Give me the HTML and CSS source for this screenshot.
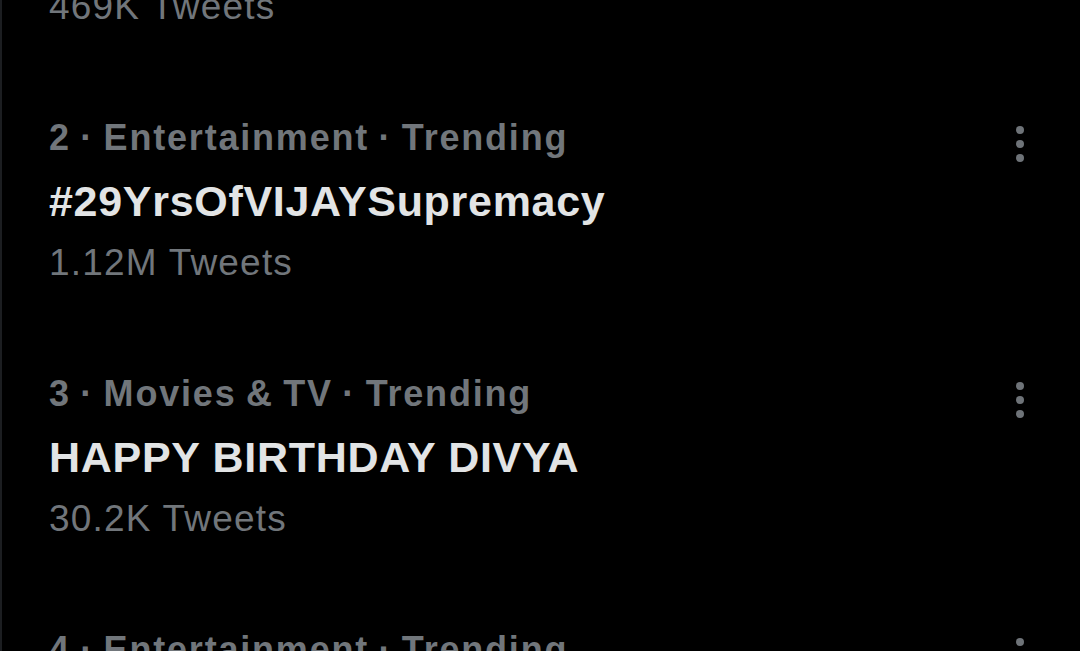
FILE: index.html
```html
<!DOCTYPE html>
<html lang="en">
<head>
    <meta charset="UTF-8">
    <meta name="viewport" content="width=device-width, initial-scale=1.0">
    <title>Trends for you</title>
    <link rel="stylesheet" href="styles.css">
</head>
<body>
    <div class="timeline">
        <div class="trend-list">
            <div class="trend">
                <div class="trend-head">
                    <div class="trend-meta">1 · Trending in India</div>
                    <svg class="more" width="8" height="36" viewBox="0 0 8 36"><circle cx="4" cy="4" r="4"/><circle cx="4" cy="18" r="4"/><circle cx="4" cy="32" r="4"/></svg>
                </div>
                <div class="trend-title">#ThalapathyVijay</div>
                <div class="trend-count">469K Tweets</div>
            </div>

            <div class="trend">
                <div class="trend-head">
                    <div class="trend-meta">2 · Entertainment · Trending</div>
                    <svg class="more" width="8" height="36" viewBox="0 0 8 36"><circle cx="4" cy="4" r="4"/><circle cx="4" cy="18" r="4"/><circle cx="4" cy="32" r="4"/></svg>
                </div>
                <div class="trend-title">#29YrsOfVIJAYSupremacy</div>
                <div class="trend-count">1.12M Tweets</div>
            </div>

            <div class="trend">
                <div class="trend-head">
                    <div class="trend-meta">3 · Movies &amp; TV · Trending</div>
                    <svg class="more" width="8" height="36" viewBox="0 0 8 36"><circle cx="4" cy="4" r="4"/><circle cx="4" cy="18" r="4"/><circle cx="4" cy="32" r="4"/></svg>
                </div>
                <div class="trend-title">HAPPY BIRTHDAY DIVYA</div>
                <div class="trend-count">30.2K Tweets</div>
            </div>

            <div class="trend">
                <div class="trend-head">
                    <div class="trend-meta">4 · Entertainment · Trending</div>
                    <svg class="more" width="8" height="36" viewBox="0 0 8 36"><circle cx="4" cy="4" r="4"/><circle cx="4" cy="18" r="4"/><circle cx="4" cy="32" r="4"/></svg>
                </div>
                <div class="trend-title">#Varisu</div>
                <div class="trend-count">52.4K Tweets</div>
            </div>
        </div>
    </div>
</body>
</html>
```

FILE: styles.css
```css
html, body {
    margin: 0;
    padding: 0;
    background: #000;
    height: 100%;
    overflow: hidden;
}

body {
    font-family: 'Liberation Sans', Arial, sans-serif;
}

.timeline {
    border-left: 2px solid #1c1e21;
    min-height: 100vh;
}

/* list is scrolled: first trend sits mostly above the fold */
.trend-list {
    margin-top: -185.5px;
}

.trend {
    padding: 35px 56px 35px 47px;
}

.trend-head {
    display: flex;
    justify-content: space-between;
    align-items: flex-start;
}

.trend-meta {
    font-size: 36px;
    line-height: 64px;
    font-weight: bold;
    letter-spacing: 1.8px;
    word-spacing: -2.3px;
    color: #71767b;
}

.more {
    fill: #6e7378;
    margin-top: 20.5px;
}

.trend-title {
    font-size: 43px;
    line-height: 63px;
    font-weight: bold;
    letter-spacing: 0.7px;
    color: #e2e4e5;
}

.trend-count {
    font-size: 37px;
    line-height: 59px;
    letter-spacing: 1.2px;
    color: #71767b;
}
```
